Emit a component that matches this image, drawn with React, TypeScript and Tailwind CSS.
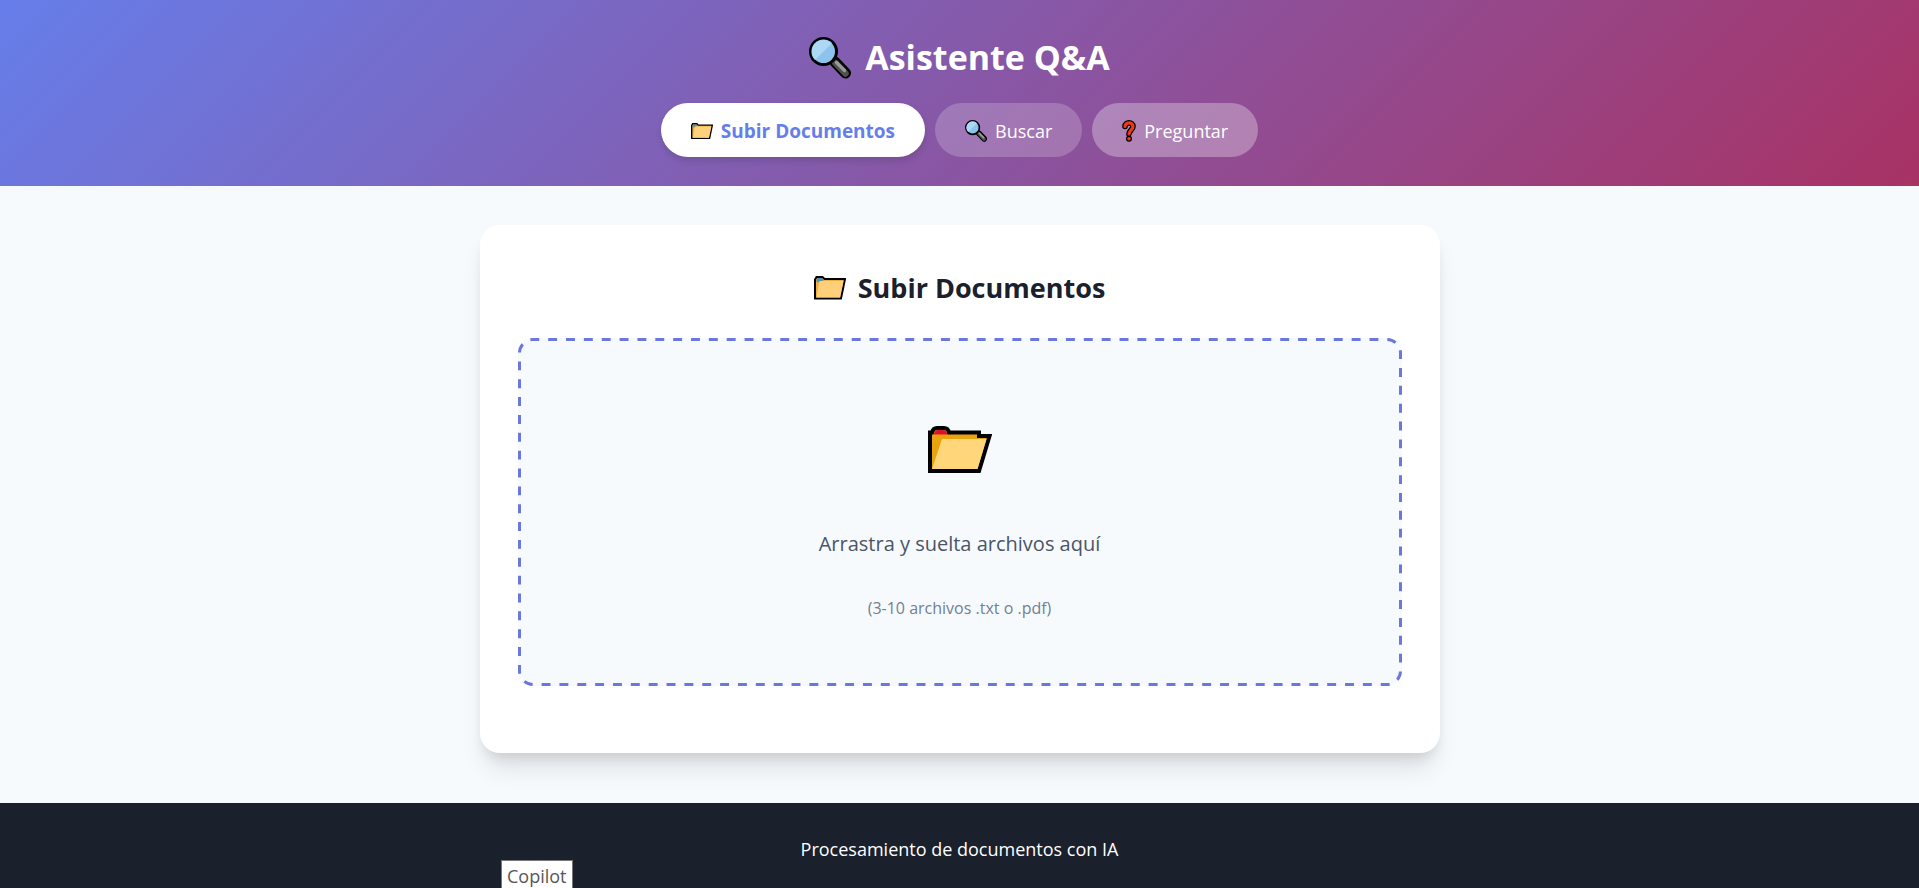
import { useState } from "react";

type IconProps = { className?: string };

function MagnifierIcon({ className }: IconProps) {
  return (
    <svg viewBox="0 0 42 42" className={className} aria-hidden="true">
      <path d="M26 25 L36.5 36" stroke="#000" strokeWidth="11" strokeLinecap="round" />
      <path d="M21 21 L28 28" stroke="#000" strokeWidth="5" />
      <path d="M23 23 L26 26" stroke="#c4b9a8" strokeWidth="2.5" />
      <path d="M26.5 26 L36.5 36.5" stroke="#505050" strokeWidth="6.5" strokeLinecap="round" />
      <path d="M27.5 25.5 L35.5 33.5" stroke="#9a9a9a" strokeWidth="3.2" strokeLinecap="round" />
      <circle cx="14.5" cy="14.5" r="13" fill="#8cc4ee" stroke="#000" strokeWidth="3" />
      <path d="M6 23 A12 12 0 0 1 23 6 Z" fill="#add8f5" />
    </svg>
  );
}

function SmallFolderIcon({ className }: IconProps) {
  return (
    <svg viewBox="0 0 64 47" className={className} aria-hidden="true">
      <path d="M2 45 V7 L5 2 H17 L21 6 H62 L54 45 Z" fill="#f0b040" stroke="#000" strokeWidth="4" />
      <path d="M5 12 V7 L7 4 H16 L20 8 L11 13 Z" fill="#5b8fb0" />
      <path d="M5 43 L11 10 H59 L52 43 Z" fill="#ffd07a" />
    </svg>
  );
}

function LargeFolderIcon({ className }: IconProps) {
  return (
    <svg viewBox="0 0 64 47" className={className} aria-hidden="true">
      <path d="M2 45 V6.5 H4 Q5 2 9 2 H16 Q20 2 21 6.5 H51 V10 H61.5 L51 45 Z" fill="#eaa20e" stroke="#000" strokeWidth="4" />
      <path d="M6 8.5 Q6.5 4 10 4 H15 Q18.5 4 19.5 8.5 Z" fill="#e0102a" />
      <path d="M4 43 L14 13 H58.5 L49.5 43 Z" fill="#ffd679" />
    </svg>
  );
}

function QuestionIcon({ className }: IconProps) {
  return (
    <svg viewBox="0 0 14 22" className={className} aria-hidden="true" fill="none" strokeLinecap="round">
      <path d="M3 6.5 C3 1.7 11 1.7 11 6.5 C11 9.5 7.5 10 7 14" stroke="#000" strokeWidth="5.6" />
      <circle cx="7" cy="18.8" r="3" fill="#000" />
      <path d="M3 6.5 C3 1.7 11 1.7 11 6.5 C11 9.5 7.5 10 7 14" stroke="#f03a17" strokeWidth="3.2" />
      <circle cx="7" cy="18.8" r="1.8" fill="#f03a17" />
    </svg>
  );
}

/* Border with evenly spaced long dashes that follow the rounded corners. */
function DashedOutline() {
  return (
    <svg className="pointer-events-none absolute inset-0 size-full" aria-hidden="true">
      <rect
        x="1.5"
        y="1.5"
        rx="13.5"
        className="h-[calc(100%-3px)] w-[calc(100%-3px)]"
        fill="none"
        stroke="#6a78dc"
        strokeWidth="3"
        pathLength="272"
        strokeDasharray="1 1"
        strokeDashoffset="0.3"
      />
    </svg>
  );
}

const base = "flex cursor-pointer items-center gap-2 rounded-full px-[30px] pt-[2px] leading-[52px]";

export default function App() {
  const [active, setActive] = useState("subir");
  const look = (id: string, idle: string) =>
    active === id
      ? "bg-white text-[19px] font-bold text-[#667eea] shadow-[0_4px_6px_rgba(0,0,0,0.12)]"
      : `text-lg ${idle}`;

  return (
    <div className="relative flex h-screen flex-col overflow-hidden bg-[#f7fafc] font-['Open_Sans','Noto_Sans',sans-serif]">
      <header className="flex shrink-0 flex-col items-center gap-[17px] bg-[linear-gradient(135deg,#667eea_0%,#a83264_100%)] pt-[29px] pb-[29px] text-white">
        <h1 className="flex items-center gap-[14px] text-[34px] leading-[57px] font-bold">
          <MagnifierIcon className="size-[42px]" />
          Asistente Q&amp;A
        </h1>
        <nav className="flex items-center gap-[10px]">
          <button type="button" onClick={() => setActive("subir")} className={`${base} ${look("subir", "bg-white/20")}`}>
            <SmallFolderIcon className="w-[22px]" />
            Subir Documentos
          </button>
          <button type="button" onClick={() => setActive("buscar")} className={`${base} ${look("buscar", "bg-white/20")}`}>
            <MagnifierIcon className="size-[22px]" />
            Buscar
          </button>
          <button type="button" onClick={() => setActive("preguntar")} className={`${base} ${look("preguntar", "bg-white/30")}`}>
            <QuestionIcon className="w-[14px]" />
            Preguntar
          </button>
        </nav>
      </header>

      <main className="shrink-0 px-4 pt-[39px] pb-[50px]">
        <section className="mx-auto flex max-w-[960px] flex-col rounded-[20px] bg-white px-[38px] pt-[38px] pb-[67px] shadow-[0_20px_25px_-5px_rgba(0,0,0,0.1),0_8px_12px_-4px_rgba(0,0,0,0.1)]">
          <h2 className="mb-[25px] flex items-center justify-center gap-3 text-[27px] leading-[50px] font-bold text-[#1a202c]">
            <SmallFolderIcon className="w-8" />
            Subir Documentos
          </h2>
          <div className="relative flex flex-col items-center rounded-[15px] bg-[#f7fafc] pt-[88px] pb-[66px]">
            <DashedOutline />
            <LargeFolderIcon className="w-16" />
            <p className="mt-[55px] text-xl leading-8 text-[#4a5568]">Arrastra y suelta archivos aquí</p>
            <p className="mt-9 text-base leading-6 text-[#718096]">(3-10 archivos .txt o .pdf)</p>
          </div>
        </section>
      </main>

      <footer className="grow bg-[#1a202c] pt-8 text-center text-lg leading-7 text-white">
        <p>Procesamiento de documentos con IA</p>
      </footer>

      <div className="absolute bottom-[-4px] left-[501px] border border-[#777] bg-white px-[5px] text-lg leading-[30px] text-[#575757]">
        Copilot
      </div>
    </div>
  );
}
